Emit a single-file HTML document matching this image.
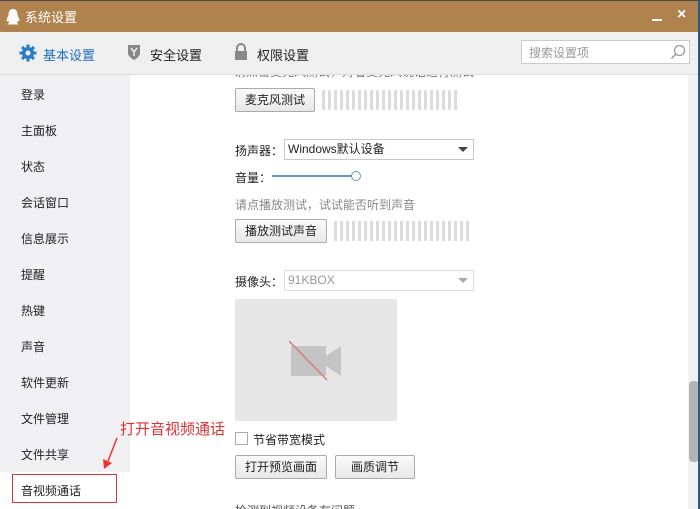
<!DOCTYPE html>
<html><head><meta charset="utf-8"><style>
*{margin:0;padding:0;box-sizing:border-box}
html,body{width:700px;height:509px;overflow:hidden}
body{position:relative;background:#fff;font-family:"Liberation Sans","Noto Sans CJK SC",sans-serif;font-size:12px;color:#222}
.abs{position:absolute}
.title{left:0;top:0;width:700px;height:32px;background:#b0824e;border-top:1px solid #4a4a4a;z-index:3}
.tabs{left:0;top:32px;width:700px;height:43px;background:#efefef;border-bottom:1px solid #ddd;z-index:3}
.side{left:0;top:75px;width:130px;height:434px;background:#f0f0f3}
.si{position:absolute;left:21px;font-size:12px;color:#222}
.btn{position:absolute;height:24px;border:1px solid #aaa;border-radius:2px;background:linear-gradient(#fafafa,#e8e8e8);font-size:12px;text-align:center;line-height:22px;color:#222}
.bars{position:absolute;height:20px;background:repeating-linear-gradient(90deg,#dcdcdc 0 3px,#fff 3px 6px)}
.sel{position:absolute;height:21px;border:1px solid #c8c8c8;background:#fff;font-size:12px;line-height:19px;padding-left:3px}
.tri{position:absolute;right:5px;top:7px;width:0;height:0;border-left:5px solid transparent;border-right:5px solid transparent;border-top:5px solid #444}
</style></head><body>
<div class="abs title">
<svg class="abs" style="left:5px;top:7px" width="16" height="18" viewBox="0 0 16 18"><path d="M8 1C4.5 1 3.5 4 3.5 7L2 10.5C1 13 2 14 3.5 13L4 14.5 2.5 16.5H13.5L12 14.5 12.5 13C14 14 15 13 14 10.5L12.5 7C12.5 4 11.5 1 8 1Z" fill="#fff"/></svg>
<div class="abs" style="left:25px;top:6px;color:#fff;font-size:13px">系统设置</div>
<div class="abs" style="left:652px;top:18px;width:10px;height:2px;background:#fff"></div>
<div class="abs" style="left:677px;top:5px;color:#fff;font-size:16px;font-weight:bold">×</div>
</div>
<div class="abs tabs">
<svg class="abs" style="left:19px;top:12px" width="18" height="18" viewBox="0 0 18 18"><g fill="#2a7ac8"><circle cx="9" cy="9" r="6"/><rect x="7.5" y="0.5" width="3" height="17"/><rect x="0.5" y="7.5" width="17" height="3"/><rect x="7.5" y="0.5" width="3" height="17" transform="rotate(45 9 9)"/><rect x="7.5" y="0.5" width="3" height="17" transform="rotate(-45 9 9)"/></g><circle cx="9" cy="9" r="2.5" fill="#efefef"/></svg>
<div class="abs" style="left:43px;top:13px;font-size:13px;color:#1f6fbf">基本设置</div>
<svg class="abs" style="left:127px;top:12px" width="14" height="17" viewBox="0 0 14 17"><path d="M1 1H13V9C13 13 7 16 7 16 7 16 1 13 1 9Z" fill="#888"/><path d="M4 4L7 8 10 4M7 8V12" stroke="#eee" stroke-width="1.5" fill="none"/></svg>
<div class="abs" style="left:150px;top:13px;font-size:13px">安全设置</div>
<svg class="abs" style="left:234px;top:11px" width="14" height="18" viewBox="0 0 14 18"><path d="M3 8V5a4 4 0 0 1 8 0v3" stroke="#888" stroke-width="2" fill="none"/><rect x="1" y="8" width="12" height="9" fill="#888"/></svg>
<div class="abs" style="left:257px;top:13px;font-size:13px">权限设置</div>
<div class="abs" style="left:521px;top:8px;width:169px;height:24px;background:#fff;border:1px solid #ccc;color:#999;padding:3px 7px;font-size:12px">搜索设置项</div>
<svg class="abs" style="left:670px;top:12px" width="16" height="16" viewBox="0 0 16 16"><circle cx="9.5" cy="6.5" r="5" stroke="#999" fill="none" stroke-width="1.3"/><path d="M6 10L1.5 14.5" stroke="#999" stroke-width="1.5"/></svg>
</div>
<div class="abs side">
<div class="si" style="top:11px">登录</div><div class="si" style="top:47px">主面板</div><div class="si" style="top:83px">状态</div><div class="si" style="top:119px">会话窗口</div><div class="si" style="top:155px">信息展示</div><div class="si" style="top:191px">提醒</div><div class="si" style="top:227px">热键</div><div class="si" style="top:263px">声音</div><div class="si" style="top:299px">软件更新</div><div class="si" style="top:335px">文件管理</div><div class="si" style="top:371px">文件共享</div>
<div class="abs" style="left:0;top:397px;width:130px;height:37px;background:#fff"></div>
<div class="si" style="top:407px">音视频通话</div>
</div>
<div class="abs" style="left:12px;top:474px;width:105px;height:29px;border:1px solid #d33"></div>
<div class="abs" style="left:120px;top:418px;color:#d33;font-size:15px">打开音视频通话</div>
<svg class="abs" style="left:100px;top:437px" width="20" height="34" viewBox="0 0 20 34"><path d="M17 1L8 24" stroke="#e33" stroke-width="1.5"/><path d="M3 22L12 26 4 32Z" fill="#e33"/></svg>
<div class="abs" style="left:234px;top:63px;color:#777;font-size:12px">请点击麦克风测试，对着麦克风说话进行测试</div>
<div class="btn" style="left:235px;top:88px;width:80px">麦克风测试</div>
<div class="bars" style="left:322px;top:90px;width:138px"></div>
<div class="abs" style="left:235px;top:142px">扬声器：</div>
<div class="sel" style="left:284px;top:139px;width:190px">Windows默认设备<div class="tri"></div></div>
<div class="abs" style="left:235px;top:169px">音量：</div>
<div class="abs" style="left:272px;top:175px;width:81px;height:2px;background:#5a9bc8"></div>
<div class="abs" style="left:351px;top:171px;width:10px;height:10px;border:1px solid #5a9bc8;border-radius:50%;background:#fff"></div>
<div class="abs" style="left:235px;top:196px;color:#888">请点播放测试，试试能否听到声音</div>
<div class="btn" style="left:235px;top:219px;width:92px">播放测试声音</div>
<div class="bars" style="left:334px;top:221px;width:138px"></div>
<div class="abs" style="left:235px;top:273px">摄像头：</div>
<div class="sel" style="left:284px;top:270px;width:190px;color:#999;border-color:#ddd">91KBOX<div class="tri" style="border-top-color:#aaa"></div></div>
<div class="abs" style="left:235px;top:299px;width:162px;height:122px;background:#e6e6e6"></div>
<svg class="abs" style="left:289px;top:340px" width="54" height="42" viewBox="0 0 54 42"><rect x="2" y="6" width="35" height="30" fill="#c4c4c4"/><path d="M37 16L52 6V36L37 26Z" fill="#c4c4c4"/><path d="M0 1L38 40" stroke="#d08080" stroke-width="1.5"/></svg>
<div class="abs" style="left:235px;top:432px;width:13px;height:13px;border:1px solid #aaa;background:#fff"></div>
<div class="abs" style="left:253px;top:431px">节省带宽模式</div>
<div class="btn" style="left:235px;top:455px;width:92px">打开预览画面</div>
<div class="btn" style="left:335px;top:455px;width:80px">画质调节</div>
<div class="abs" style="left:235px;top:503px;width:200px;height:6px;overflow:hidden"><div style="color:#555;white-space:nowrap;margin-top:-1px">检测到视频设备有问题</div></div>
<div class="abs" style="left:688px;top:75px;width:12px;height:434px;background:#f2f2f2"></div>
<div class="abs" style="left:689px;top:381px;width:10px;height:81px;background:#b4b4b4;border-radius:4px"></div>
<div class="abs" style="left:698px;top:0;width:2px;height:509px;background:#2d5a80;z-index:4"></div>
</body></html>
